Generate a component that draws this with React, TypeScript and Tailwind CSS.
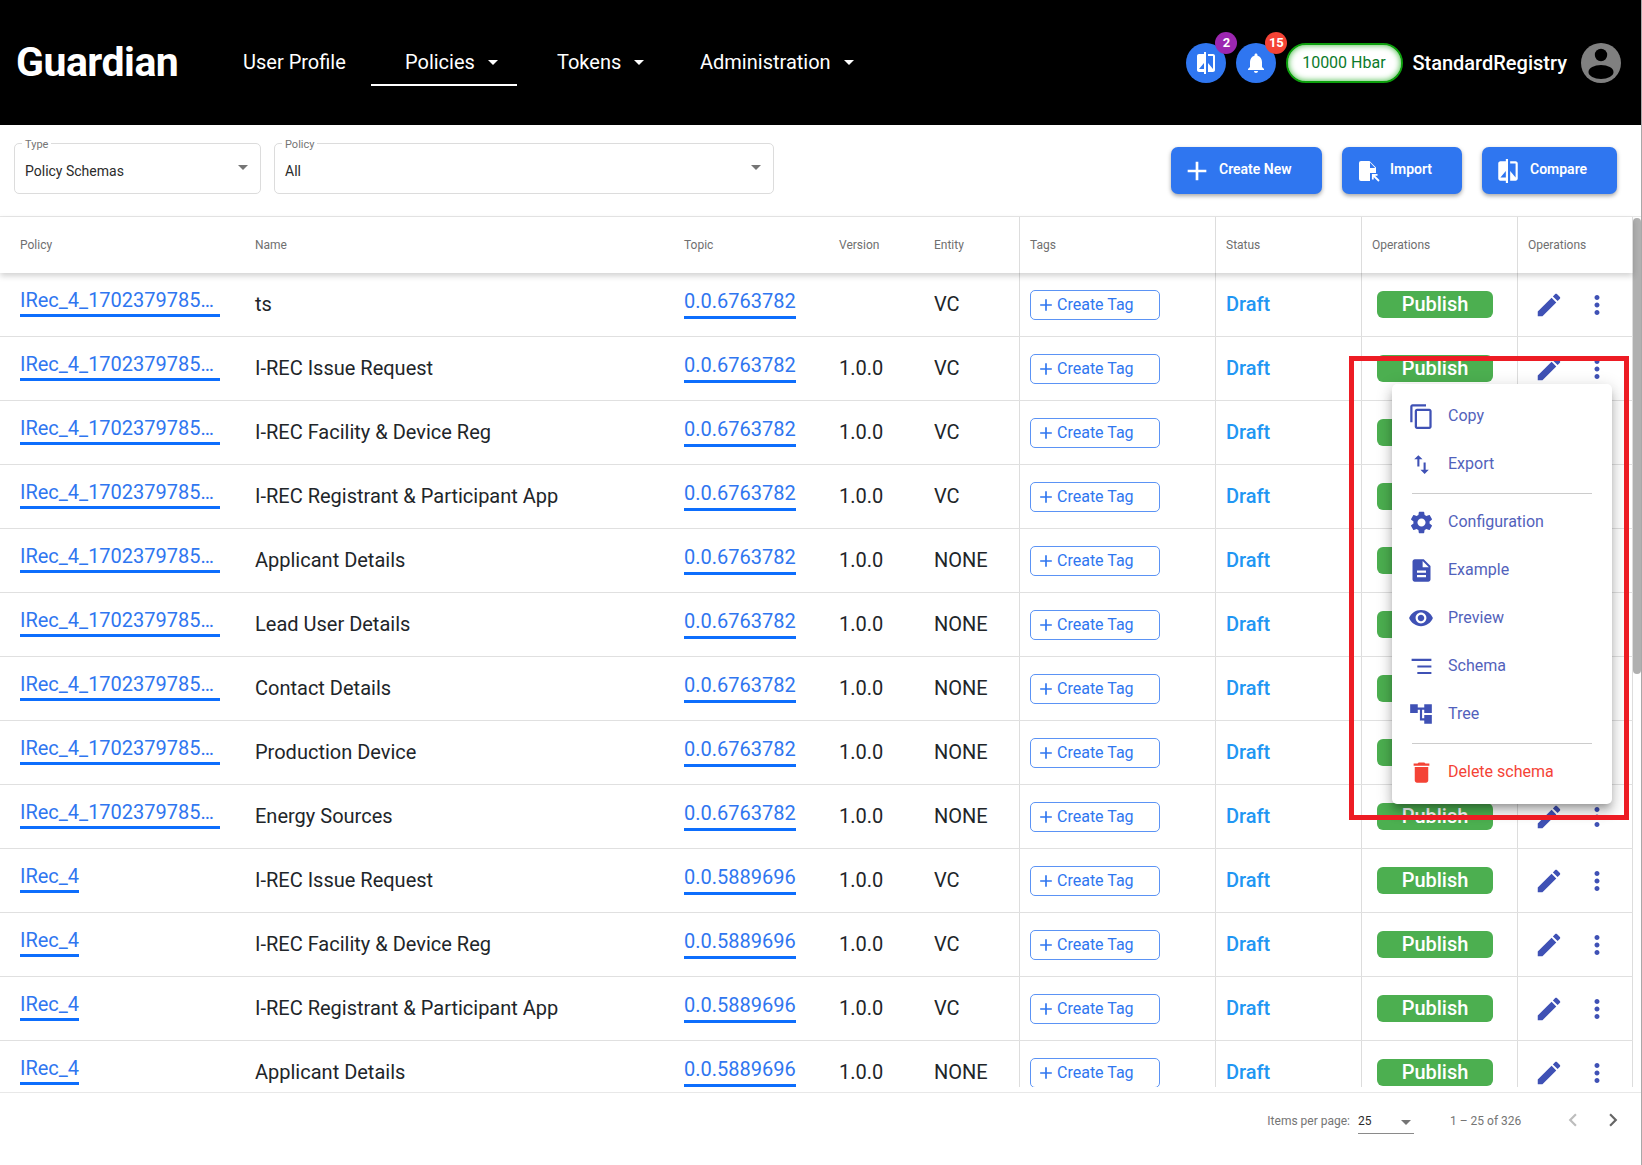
import React from "react";

const P = {
  edit: "M3 17.25V21h3.75L17.81 9.94l-3.75-3.75L3 17.25zM20.71 7.04c.39-.39.39-1.02 0-1.41l-2.34-2.34c-.39-.39-1.02-.39-1.41 0l-1.83 1.83 3.75 3.75 1.83-1.83z",
  more: "M12 8c1.1 0 2-.9 2-2s-.9-2-2-2-2 .9-2 2 .9 2 2 2zm0 2c-1.1 0-2 .9-2 2s.9 2 2 2 2-.9 2-2-.9-2-2-2zm0 6c-1.1 0-2 .9-2 2s.9 2 2 2 2-.9 2-2-.9-2-2-2z",
  copy: "M16 1H4c-1.1 0-2 .9-2 2v14h2V3h12V1zm3 4H8c-1.1 0-2 .9-2 2v14c0 1.1.9 2 2 2h11c1.1 0 2-.9 2-2V7c0-1.1-.9-2-2-2zm0 16H8V7h11v14z",
  swap: "M16 17.01V10h-2v7.01h-3L15 21l4-3.99h-3zM9 3L5 6.99h3V14h2V6.99h3L9 3z",
  gear: "M19.14,12.94c0.04-0.3,0.06-0.61,0.06-0.94c0-0.32-0.02-0.64-0.07-0.94l2.03-1.58c0.18-0.14,0.23-0.41,0.12-0.61 l-1.92-3.32c-0.12-0.22-0.37-0.29-0.59-0.22l-2.39,0.96c-0.5-0.38-1.03-0.7-1.62-0.94L14.4,2.81c-0.04-0.24-0.24-0.41-0.48-0.41 h-3.84c-0.24,0-0.43,0.17-0.47,0.41L9.25,5.35C8.66,5.59,8.12,5.92,7.63,6.29L5.24,5.33c-0.22-0.08-0.47,0-0.59,0.22L2.74,8.87 C2.62,9.08,2.66,9.34,2.86,9.48l2.03,1.58C4.84,11.36,4.8,11.69,4.8,12s0.02,0.64,0.07,0.94l-2.03,1.58 c-0.18,0.14-0.23,0.41-0.12,0.61l1.92,3.32c0.12,0.22,0.37,0.29,0.59,0.22l2.39-0.96c0.5,0.38,1.03,0.7,1.62,0.94l0.36,2.54 c0.05,0.24,0.24,0.41,0.48,0.41h3.84c0.24,0,0.44-0.17,0.47-0.41l0.36-2.54c0.59-0.24,1.13-0.56,1.62-0.94l2.39,0.96 c0.22,0.08,0.47,0,0.59-0.22l1.92-3.32c0.12-0.22,0.07-0.47-0.12-0.61L19.14,12.94z M12,15.6c-1.98,0-3.6-1.62-3.6-3.6 s1.62-3.6,3.6-3.6s3.6,1.62,3.6,3.6S13.98,15.6,12,15.6z",
  doc: "M14 2H6c-1.1 0-1.99.9-1.99 2L4 20c0 1.1.89 2 1.99 2H18c1.1 0 2-.9 2-2V8l-6-6zm2 16H8v-2h8v2zm0-4H8v-2h8v2zm-3-5V3.5L18.5 9H13z",
  eye: "M12 4.5C7 4.5 2.73 7.61 1 12c1.73 4.39 6 7.5 11 7.5s9.27-3.11 11-7.5c-1.73-4.39-6-7.5-11-7.5zM12 17c-2.76 0-5-2.24-5-5s2.24-5 5-5 5 2.24 5 5-2.24 5-5 5zm0-8c-1.66 0-3 1.34-3 3s1.34 3 3 3 3-1.34 3-3-1.34-3-3-3z",
  lines: "M2.5 4.6h19v2h-19zM8 11h13.5v2H8zM8 17.2h13.5v2H8z",
  tree: "M22 11V3h-7v3H9V3H2v8h7V8h2v10h4v3h7v-8h-7v3h-2V8h2v3z",
  trash: "M6 19c0 1.1.9 2 2 2h8c1.1 0 2-.9 2-2V7H6v12zM19 4h-3.5l-1-1h-5l-1 1H5v2h14V4z",
  bell: "M12 22c1.1 0 2-.9 2-2h-4c0 1.1.89 2 2 2zm6-6v-5c0-3.07-1.64-5.64-4.5-6.32V4c0-.83-.67-1.5-1.5-1.5s-1.5.67-1.5 1.5v.68C7.63 5.36 6 7.92 6 11v5l-2 2v1h16v-1l-2-2z",
  compare: "M10 3H5c-1.1 0-2 .9-2 2v14c0 1.1.9 2 2 2h5v2h2V1h-2v2zm0 15H5l5-6v6zm9-15h-5v2h5v13l-5-6v9h5c1.1 0 2-.9 2-2V5c0-1.1-.9-2-2-2z",
  plus: "M19 13h-6v6h-2v-6H5v-2h6V5h2v6h6v2z",
  chev: "M15.41 7.41L14 6l-6 6 6 6 1.41-1.41L10.83 12z",
  chevR: "M10 6L8.59 7.41 13.17 12l-4.58 4.59L10 18l6-6z",
};

function Ic({ d, s, c }: { d: string; s: string; c: string }) {
  return (
    <svg viewBox="0 0 24 24" className={`${s} ${c} shrink-0 fill-current`}>
      <path d={d} />
    </svg>
  );
}

function Caret({ c = "fill-white" }: { c?: string }) {
  return (
    <svg viewBox="0 0 10 5" className={`w-[10px] h-[5px] ${c}`}>
      <polygon points="0,0 10,0 5,5" />
    </svg>
  );
}

const L = "IRec_4_1702379785…";
const rows = [
  [L, "ts", "0.0.6763782", "", "VC"],
  [L, "I-REC Issue Request", "0.0.6763782", "1.0.0", "VC"],
  [L, "I-REC Facility & Device Reg", "0.0.6763782", "1.0.0", "VC"],
  [L, "I-REC Registrant & Participant App", "0.0.6763782", "1.0.0", "VC"],
  [L, "Applicant Details", "0.0.6763782", "1.0.0", "NONE"],
  [L, "Lead User Details", "0.0.6763782", "1.0.0", "NONE"],
  [L, "Contact Details", "0.0.6763782", "1.0.0", "NONE"],
  [L, "Production Device", "0.0.6763782", "1.0.0", "NONE"],
  [L, "Energy Sources", "0.0.6763782", "1.0.0", "NONE"],
  ["IRec_4", "I-REC Issue Request", "0.0.5889696", "1.0.0", "VC"],
  ["IRec_4", "I-REC Facility & Device Reg", "0.0.5889696", "1.0.0", "VC"],
  ["IRec_4", "I-REC Registrant & Participant App", "0.0.5889696", "1.0.0", "VC"],
  ["IRec_4", "Applicant Details", "0.0.5889696", "1.0.0", "NONE"],
];

const cell = "flex items-center shrink-0 h-full";
const w = {
  policy: "w-[255px] pl-[20px]",
  name: "w-[429px]",
  topic: "w-[155px]",
  version: "w-[95px]",
  entity: "w-[85px]",
  tags: "w-[196px] pl-[10px] border-l border-[#dddddd]",
  status: "w-[146px] pl-[10px] border-l border-[#dddddd]",
  ops: "w-[156px] pl-[10px] border-l border-[#dddddd]",
  ops2: "w-[116px] pl-[10px] border-l border-r border-[#dddddd]",
};

function Row({ r }: { r: string[] }) {
  return (
    <div className="flex h-[64px] shrink-0 border-b border-[#e0e0e0] text-[20px] text-[#212529]">
      <div className={`${cell} ${w.policy}`}>
        <span className={`${r[0] === L ? "w-[200px]" : ""} block border-b-[3px] border-[#0d6efd] text-[#2f76f0] leading-[24px] pb-[2px] mb-[5px]`}>{r[0]}</span>
      </div>
      <div className={`${cell} ${w.name} pb-[2px]`}>{r[1]}</div>
      <div className={`${cell} ${w.topic}`}>
        <span className="block border-b-[3px] border-[#0d6efd] text-[#2f76f0] leading-[24px] pb-[3px] mb-[1px] w-[112px]">{r[2]}</span>
      </div>
      <div className={`${cell} ${w.version} pb-[2px]`}>{r[3]}</div>
      <div className={`${cell} ${w.entity} pb-[2px]`}>{r[4]}</div>
      <div className={`${cell} ${w.tags}`}>
        <div className="flex items-center w-[130px] h-[30px] rounded-[5px] border border-[#5b93f5] text-[16px] text-[#2f76f0] pl-[5px]">
          <Ic d={P.plus} s="w-[20px] h-[20px]" c="text-[#2f76f0] mr-[1px]" />
          Create Tag
        </div>
      </div>
      <div className={`${cell} ${w.status} pb-[2px] font-medium text-[#2196f3]`}>Draft</div>
      <div className={`${cell} ${w.ops}`}>
        <div className="ml-[5px] w-[116px] h-[27px] pb-[2px] rounded-[6px] bg-[#4caf50] text-white font-medium flex items-center justify-center">Publish</div>
      </div>
      <div className={`${cell} ${w.ops2} !pl-[16px]`}>
        <Ic d={P.edit} s="w-[30px] h-[30px]" c="text-[#3f51b5]" />
        <Ic d={P.more} s="w-[30px] h-[30px]" c="text-[#3f51b5] ml-[18px]" />
      </div>
    </div>
  );
}

function Select({ label, value, width }: { label: string; value: string; width: string }) {
  return (
    <div className={`relative ${width} h-[51px] rounded-[5px] border border-[#dcdcdc] flex items-center justify-between pl-[10px] pr-[12px]`}>
      <span className="absolute -top-[6px] left-[7px] bg-white px-[3px] text-[11px] leading-[13px] text-[#757575]">{label}</span>
      <span className="text-[14px] text-[#2b2b2b] mt-[6px]">{value}</span>
      <Caret c="fill-[#757575] -mt-[3px]" />
    </div>
  );
}

function Btn({ children, width, text, gap, pad }: { children: React.ReactNode; width: string; text: string; gap: string; pad: string }) {
  return (
    <div className={`${width} ${pad} h-[47px] rounded-[7px] bg-[#2f76f0] shadow-[0_2px_4px_rgba(0,0,0,0.35)] flex items-center text-white text-[14px] font-semibold`}>
      {children}
      <span className={`${gap} -mt-[2px]`}>{text}</span>
    </div>
  );
}

const menu1 = [
  { d: P.copy, t: "Copy", s: "w-[27px] h-[27px]" },
  { d: P.swap, t: "Export", s: "w-[25px] h-[25px]" },
];
const menu2 = [
  { d: P.gear, t: "Configuration", s: "w-[27px] h-[27px]" },
  { d: P.doc, t: "Example", s: "w-[27px] h-[27px]" },
  { d: P.eye, t: "Preview", s: "w-[26px] h-[26px]" },
  { d: P.lines, t: "Schema", s: "w-[25px] h-[25px]" },
  { d: P.tree, t: "Tree", s: "w-[26px] h-[26px]" },
];

function MItem({ d, t, s, red }: { d: string; t: string; s: string; red?: boolean }) {
  const col = red ? "text-[#f44336]" : "text-[#3f51b5]";
  return (
    <div className={`h-[48px] flex items-center ${col} text-[16px]`}>
      <div className="w-[56px] pl-[2px] flex justify-center shrink-0">
        <Ic d={d} s={s} c={col} />
      </div>
      <span className={red ? "opacity-100" : "opacity-90"}>{t}</span>
    </div>
  );
}

export default function App() {
  return (
    <div className="relative w-[1642px] h-[1165px] bg-white overflow-hidden flex flex-col border-r border-[#a8a8a8] font-['Roboto',sans-serif]">
      <header className="h-[125px] shrink-0 bg-black text-white flex items-center">
        <div className="w-[209px] pl-[16px] text-[41px] font-bold tracking-[-0.5px]">Guardian</div>
        <nav className="flex h-full items-center text-[20px] pb-[2px]">
          <div className="w-[162px] pl-[34px]">User Profile</div>
          <div className="relative w-[146px] pl-[34px] flex items-center">
            Policies
            <Caret c="fill-white ml-[13px] mt-[2px]" />
            <span className="absolute left-0 right-0 top-[37px] h-[2px] bg-white" />
          </div>
          <div className="ml-[6px] w-[143px] pl-[34px] flex items-center">
            Tokens
            <Caret c="fill-white ml-[13px] mt-[2px]" />
          </div>
          <div className="pl-[34px] flex items-center">
            Administration
            <Caret c="fill-white ml-[13px] mt-[2px]" />
          </div>
        </nav>
        <div className="ml-auto flex items-center pr-[20px]">
          <div className="relative w-[40px] h-[40px] rounded-full bg-[#2f76f0] flex items-center justify-center">
            <Ic d={P.compare} s="w-[24px] h-[24px]" c="text-white" />
            <span className="absolute -top-[11px] -right-[11px] w-[22px] h-[22px] rounded-full bg-[#9c27b0] text-[13px] font-bold flex items-center justify-center">2</span>
          </div>
          <div className="relative ml-[10px] w-[40px] h-[40px] rounded-full bg-[#2f76f0] flex items-center justify-center">
            <Ic d={P.bell} s="w-[24px] h-[24px]" c="text-white" />
            <span className="absolute -top-[11px] -right-[11px] w-[22px] h-[22px] rounded-full bg-[#f44336] text-[13px] font-bold flex items-center justify-center">15</span>
          </div>
          <div className="ml-[10px] w-[117px] h-[40px] pr-[2px] rounded-full bg-white border-2 border-[#0da00d] shadow-[inset_0_0_6px_#39b539] text-[#0b7a2a] text-[16px] flex items-center justify-center">10000 Hbar</div>
          <div className="ml-[9px] text-[20px] font-medium">StandardRegistry</div>
          <svg viewBox="0 0 40 40" className="ml-[14px] w-[40px] h-[40px]">
            <circle cx="20" cy="20" r="20" fill="#808080" />
            <circle cx="20" cy="12" r="6.2" fill="#000" />
            <ellipse cx="20" cy="29" rx="12.5" ry="7" fill="#000" />
          </svg>
        </div>
      </header>

      <div className="h-[91px] shrink-0 flex">
        <div className="flex gap-[13px] pl-[14px] pt-[18px]">
          <Select label="Type" value="Policy Schemas" width="w-[247px]" />
          <Select label="Policy" value="All" width="w-[500px]" />
        </div>
        <div className="ml-auto flex gap-[20px] pt-[22px] pr-[24px]">
          <Btn width="w-[151px]" pad="pl-[10px]" text="Create New" gap="ml-[6px]">
            <Ic d={P.plus} s="w-[32px] h-[32px]" c="text-white" />
          </Btn>
          <Btn width="w-[120px]" pad="pl-[15px]" text="Import" gap="ml-[9px]">
            <svg viewBox="0 0 24 24" className="w-[24px] h-[24px] shrink-0">
              <path fill="#fff" fillRule="evenodd" d="M4 2h8.5L19 8.5V14h-6v8H4a2 2 0 0 1-2-2V4a2 2 0 0 1 2-2zM13 3.5V9h5.2z" />
              <path fill="none" stroke="#fff" strokeWidth="1.8" d="M22 22l-5.5-5.5M15.8 20.5v-4.7h4.7" />
            </svg>
          </Btn>
          <Btn width="w-[135px]" pad="pl-[13px]" text="Compare" gap="ml-[9px]">
            <Ic d={P.compare} s="w-[26px] h-[26px]" c="text-white" />
          </Btn>
        </div>
      </div>

      <div className="flex-1 flex min-h-0 border-t border-[#e8e8e8]">
        <div className="w-[1633px] shrink-0 flex flex-col min-h-0">
          <div className="relative z-10 flex h-[56px] shrink-0 text-[12px] text-[#6f6f6f] bg-white shadow-[0_3px_6px_rgba(0,0,0,0.18)]">
            <div className={`${cell} ${w.policy}`}>Policy</div>
            <div className={`${cell} ${w.name}`}>Name</div>
            <div className={`${cell} ${w.topic}`}>Topic</div>
            <div className={`${cell} ${w.version}`}>Version</div>
            <div className={`${cell} ${w.entity}`}>Entity</div>
            <div className={`${cell} ${w.tags}`}>Tags</div>
            <div className={`${cell} ${w.status}`}>Status</div>
            <div className={`${cell} ${w.ops}`}>Operations</div>
            <div className={`${cell} ${w.ops2}`}>Operations</div>
          </div>
          <div className="h-[814px] overflow-hidden flex flex-col">
            {rows.map((r, i) => (
              <Row key={i} r={r} />
            ))}
          </div>
        </div>
        <div className="flex-1 pt-[1px]">
          <div className="w-[8px] h-[456px] rounded-full bg-[#b0b0b0]" />
        </div>
      </div>

      <div className="h-[73px] shrink-0 border-t border-[#e8e8e8] flex items-start pt-[21px] text-[12px] text-[#757575] justify-end pr-[15px]">
        <span className="leading-[14px]">Items per page:</span>
        <div className="ml-[8px] w-[56px] h-[20px] border-b border-[#8a8a8a] flex justify-between pr-[3px]">
          <span className="text-[#2b2b2b] leading-[14px]">25</span>
          <Caret c="fill-[#757575] mt-[6px]" />
        </div>
        <span className="ml-[36px] w-[110px] leading-[14px]">1 – 25 of 326</span>
        <div className="-mt-[7px] flex">
          <Ic d={P.chev} s="w-[26px] h-[26px]" c="text-[#bdbdbd]" />
          <Ic d={P.chevR} s="w-[26px] h-[26px]" c="text-[#666666] ml-[14px]" />
        </div>
      </div>

      {/* Open context menu */}
      <div className="absolute left-[1392px] top-[384px] w-[220px] h-[420px] bg-white rounded-[5px] shadow-[0_5px_6px_-3px_rgba(0,0,0,0.25),0_9px_12px_1px_rgba(0,0,0,0.15),0_3px_16px_2px_rgba(0,0,0,0.12)] py-[8px] z-20">
        {menu1.map((m) => <MItem key={m.t} {...m} />)}
        <div className="mx-[20px] mt-[5px] mb-[4px] h-px bg-[#cccccc]" />
        {menu2.map((m) => <MItem key={m.t} {...m} />)}
        <div className="mx-[20px] mt-[5px] mb-[4px] h-px bg-[#cccccc]" />
        <MItem d={P.trash} t="Delete schema" s="w-[27px] h-[27px]" red />
      </div>

      {/* Annotation rectangle */}
      <div className="absolute left-[1349px] top-[356px] w-[280px] h-[464px] border-[5px] border-[#ed1c24] z-30 pointer-events-none" />
    </div>
  );
}
